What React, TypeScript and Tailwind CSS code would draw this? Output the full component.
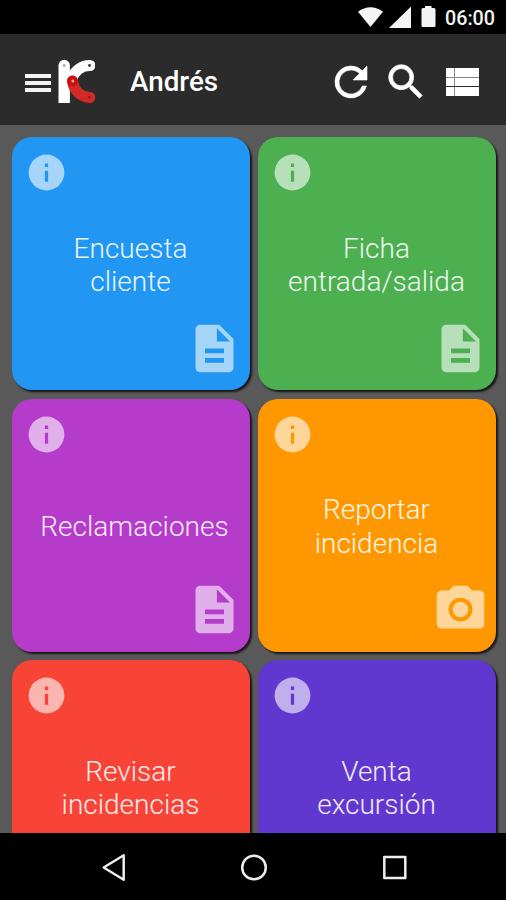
import type { ReactNode } from "react";

type Kind = "form" | "photo";

type Tile = {
  lines: string[];
  bg: string;
  kind?: Kind;
  nudge?: string;
};

const tiles: Tile[] = [
  { lines: ["Encuesta", "cliente"], bg: "bg-[#2196f3]", kind: "form" },
  { lines: ["Ficha", "entrada/salida"], bg: "bg-[#4caf50]", kind: "form" },
  { lines: ["Reclamaciones"], bg: "bg-[#b53bcb]", kind: "form", nudge: "pl-[8px]" },
  { lines: ["Reportar", "incidencia"], bg: "bg-[#ff9800]", kind: "photo" },
  { lines: ["Revisar", "incidencias"], bg: "bg-[#f84437]", kind: "form" },
  { lines: ["Venta", "excursión"], bg: "bg-[#6038d0]", kind: "form" },
];

function Icon({ className, children }: { className: string; children: ReactNode }) {
  return (
    <svg viewBox="0 0 24 24" fill="currentColor" className={`block shrink-0 ${className}`}>
      {children}
    </svg>
  );
}

function StatusBar() {
  return (
    <div className="flex h-[34px] shrink-0 items-center justify-end bg-black pr-[10px] text-[#f4f4f4]">
      <svg viewBox="0 0 78 22" fill="currentColor" className="block h-[22px] w-[78px]">
        <path d="M0 5.800C7.500-.4 17.500-.4 25 5.800L12.500 21z" />
        <path d="M53 .5V22H31z" />
        <path d="M67 0h6.500v2H76q1.500 0 1.500 1.500V19.500q0 1.500-1.500 1.500H65q-1.500 0-1.500-1.500V3.500Q63.500 2 65 2h2z" />
      </svg>
      <span className="ml-[9px] w-[51px] whitespace-nowrap pt-[3px] text-[19.700px] font-medium leading-[34px]">06:00</span>
    </div>
  );
}

function Logo() {
  return (
    <svg viewBox="0 0 40 48" fill="none" className="ml-1 mt-1 block h-12 w-10 shrink-0">
      <path d="M3.500 46V8.500a5.700 5.700 0 0 1 11.400 0V46z" fill="#fff" />
      <path d="M35 8.500C27 8.500 20 13 16.500 22" stroke="#fff" strokeWidth="11" strokeLinecap="round" />
      <path d="M17.500 24C18.500 33 25 39.500 34.800 40.500" stroke="#d32a26" strokeWidth="11" strokeLinecap="round" />
      <circle cx="17.500" cy="24" r="5.300" fill="#cc0d10" />
      <circle cx="9.200" cy="8.500" r="1.400" fill="#aaa" />
      <circle cx="34.500" cy="8.500" r="1.400" fill="#333" />
      <circle cx="17.800" cy="24" r="1.500" fill="#f3a4a0" />
      <circle cx="34.500" cy="40" r="1.500" fill="#8c2020" />
    </svg>
  );
}

function Header() {
  return (
    <header className="flex h-[91px] shrink-0 items-center bg-[#2b2b2b] pb-px pl-[25px] text-white">
      <div className="mt-[7px] flex w-[26px] flex-col gap-[3px]">
        <span className="h-1 bg-[#f4f4f4]" />
        <span className="h-1 bg-[#f4f4f4]" />
        <span className="h-1 bg-[#f4f4f4]" />
      </div>
      <Logo />
      <h1 className="ml-[35px] mt-1.5 w-[197px] text-[27.800px] font-medium leading-8">Andrés</h1>
      <div className="mt-[5px] flex items-center">
        <Icon className="h-12 w-12">
          <path
            d="M17.650 6.350A7.950 7.950 0 0 0 12 4a8 8 0 1 0 7.730 10h-2.080A6 6 0 1 1 12 6c1.660 0 3.140.69 4.220 1.780L13 11h7V4z"
            stroke="currentColor"
            strokeWidth=".3"
          />
        </Icon>
        <Icon className="ml-2 h-[46px] w-[46px]">
          <path
            d="M15.500 14h-.79l-.28-.27A6.500 6.500 0 1 0 13.730 14.430l.27.28v.79l5 4.990L20.490 19zm-6 0a4.500 4.500 0 1 1 0-9 4.500 4.500 0 0 1 0 9z"
            stroke="currentColor"
            strokeWidth=".35"
          />
        </Icon>
        <svg viewBox="0 0 33 28" fill="currentColor" className="ml-[17px] block h-7 w-[33px] shrink-0">
          <path d="M0 0h33v28H0z" />
          <path d="M0 9.500h33M8.500 0v28" stroke="#888" strokeWidth="1" />
          <path d="M0 18.500h33" stroke="#2b2b2b" strokeWidth="1.200" />
        </svg>
      </div>
    </header>
  );
}

function KindIcon({ kind }: { kind?: Kind }) {
  if (kind === "photo") {
    return (
      <Icon className="h-[57px] w-[57px]">
        <circle cx="12" cy="12" r="3.300" />
        <path d="M9 2 7.170 4H4c-1.100 0-2 .9-2 2v12c0 1.100.9 2 2 2h16c1.100 0 2-.9 2-2V6c0-1.100-.9-2-2-2h-3.170L15 2zm3 15a5 5 0 1 1 0-10 5 5 0 0 1 0 10z" />
      </Icon>
    );
  }
  return (
    <Icon className="h-[57px] w-[57px]">
      <path d="M14 2H6c-1.100 0-2 .9-2 2v16c0 1.100.9 2 2 2h12c1.100 0 2-.9 2-2V8zm2 16H8v-2h8zm0-4H8v-2h8zm-3-5V3.500L18.500 9z" />
    </Icon>
  );
}

function TileCard({ tile }: { tile: Tile }) {
  return (
    <div
      className={`relative flex h-[253px] items-center justify-center rounded-[20px] pt-[3px] shadow-[2px_2px_2px_#161616] ${tile.bg} ${tile.nudge ?? ""}`}
    >
      <div className="absolute left-[13.500px] top-[14px] text-white/60">
        <Icon className="h-[43px] w-[43px]">
          <path d="M12 2a10 10 0 1 0 0 20 10 10 0 0 0 0-20zm.9 15.200h-1.800V11h1.800zm0-8.300h-1.800V7h1.800z" />
        </Icon>
      </div>
      <p className="text-center text-[28px] font-light leading-[33.500px] text-white/90">
        {tile.lines.map((line) => (
          <span key={line} className="block whitespace-nowrap">
            {line}
          </span>
        ))}
      </p>
      <div className="absolute bottom-[13.500px] right-[7px] text-white/60">
        <KindIcon kind={tile.kind} />
      </div>
    </div>
  );
}

function NavBar() {
  return (
    <nav className="flex h-[67px] shrink-0 items-center bg-black pl-[99px]">
      <svg viewBox="0 0 30 30" fill="none" stroke="#eee" strokeWidth="2.500" strokeLinejoin="round" className="h-[30px] w-[30px]">
        <path d="M24.700 3.300V27.700L4.700 15.500z" />
      </svg>
      <svg viewBox="0 0 30 30" fill="none" stroke="#eee" strokeWidth="2.500" className="ml-[110px] h-[30px] w-[30px]">
        <circle cx="15" cy="15.500" r="11.800" />
      </svg>
      <svg viewBox="0 0 30 30" fill="none" stroke="#eee" strokeWidth="2.500" strokeLinejoin="round" className="ml-[111px] h-[30px] w-[30px]">
        <rect x="4.300" y="5" width="21" height="21" />
      </svg>
    </nav>
  );
}

export default function App() {
  return (
    <div className="flex h-[900px] w-[506px] flex-col overflow-hidden bg-[#595959] font-['Roboto',sans-serif]">
      <StatusBar />
      <Header />
      <main className="min-h-0 flex-1 overflow-hidden pl-[11.500px] pr-[10.500px] pt-[12.400px]">
        <div className="grid grid-cols-2 gap-x-[8px] gap-y-[8.400px]">
          {tiles.map((tile) => (
            <TileCard key={tile.lines[0]} tile={tile} />
          ))}
        </div>
      </main>
      <NavBar />
    </div>
  );
}
